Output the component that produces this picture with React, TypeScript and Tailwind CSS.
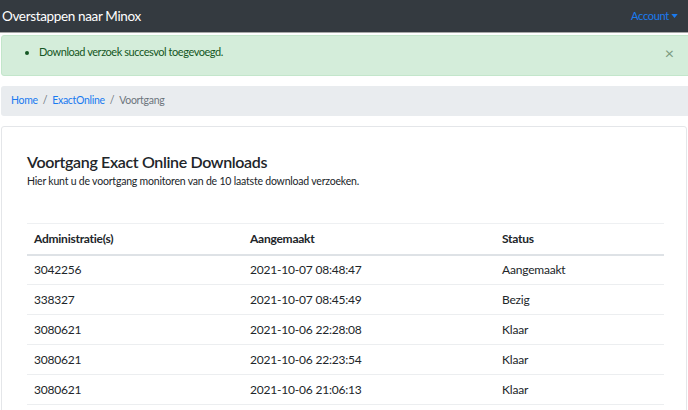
const rows = [
  { admin: "3042256", created: "2021-10-07 08:48:47", status: "Aangemaakt" },
  { admin: "338327", created: "2021-10-07 08:45:49", status: "Bezig" },
  { admin: "3080621", created: "2021-10-06 22:28:08", status: "Klaar" },
  { admin: "3080621", created: "2021-10-06 22:23:54", status: "Klaar" },
  { admin: "3080621", created: "2021-10-06 21:06:13", status: "Klaar" },
];

export default function App() {
  return (
    <div className="h-[410px] w-[688px] overflow-hidden bg-white font-['Lato',sans-serif] text-[12px] text-[#212529]">
      <nav className="flex h-[33px] items-center justify-between border-b border-[#a8a8a8] bg-[#343a40] pl-[2px] pr-[10px]">
        <span className="text-[13.5px] tracking-[-0.35px] text-white">Overstappen naar Minox</span>
        <span className="flex items-center gap-[2px] text-[11px] tracking-[-0.3px] text-[#1a7af0]">
          Account
          <svg width="7" height="4" viewBox="0 0 8 5">
            <path d="M0 0h8L4 5z" fill="#1a7af0" />
          </svg>
        </span>
      </nav>

      <div className="mt-[2px] ml-[1px] mr-[-8px] flex h-[41px] items-start justify-between rounded-[3px] border border-[#c3e6cb] bg-[#d4edda] pt-[8px] pl-[28px] pr-[21px] text-[#155724]">
        <ul className="list-disc">
          <li className="ml-[9px] text-[11px] tracking-[-0.45px]">Download verzoek succesvol toegevoegd.</li>
        </ul>
        <span className="mt-[1px] text-[16px] leading-none text-[#7a9a7f]">×</span>
      </div>

      <div className="mt-[10px] ml-[1px] flex h-[30px] items-center gap-[5px] rounded-l-[3px] bg-[#e9ecef] pl-[10px] text-[10.5px] tracking-[-0.3px]">
        <span className="text-[#1a7af0]">Home</span>
        <span className="text-[#6c757d]">/</span>
        <span className="text-[#1a7af0]">ExactOnline</span>
        <span className="text-[#6c757d]">/</span>
        <span className="text-[#6c757d]">Voortgang</span>
      </div>

      <div className="mt-[10px] ml-[1px] mr-[1px] h-[300px] rounded-[3px] border border-[#e4e6e9] px-[25px] pt-[24px]">
        <h1 className="text-[16px] font-semibold leading-[22px] tracking-[-0.35px]">
          Voortgang Exact Online Downloads
        </h1>
        <p className="mt-[1px] text-[10.5px] leading-[15px] tracking-[-0.2px]">
          Hier kunt u de voortgang monitoren van de 10 laatste download verzoeken.
        </p>

        <table className="mt-[34px] w-[637px] border-collapse text-left">
          <thead>
            <tr className="h-[31px] border-t border-b-2 border-t-[#eef0f2] border-b-[#dee2e6]">
              <th className="w-[216px] pl-[7px] font-bold tracking-[-0.25px]">Administratie(s)</th>
              <th className="w-[252px] pl-[7px] font-bold tracking-[-0.25px]">Aangemaakt</th>
              <th className="pl-[7px] font-bold tracking-[-0.25px]">Status</th>
            </tr>
          </thead>
          <tbody className="tracking-[-0.2px]">
            {rows.map((r, i) => (
              <tr key={i} className="h-[30px] border-b border-[#eceef0]">
                <td className="pl-[7px]">{r.admin}</td>
                <td className="pl-[7px]">{r.created}</td>
                <td className="pl-[7px]">{r.status}</td>
              </tr>
            ))}
          </tbody>
        </table>
      </div>
    </div>
  );
}
